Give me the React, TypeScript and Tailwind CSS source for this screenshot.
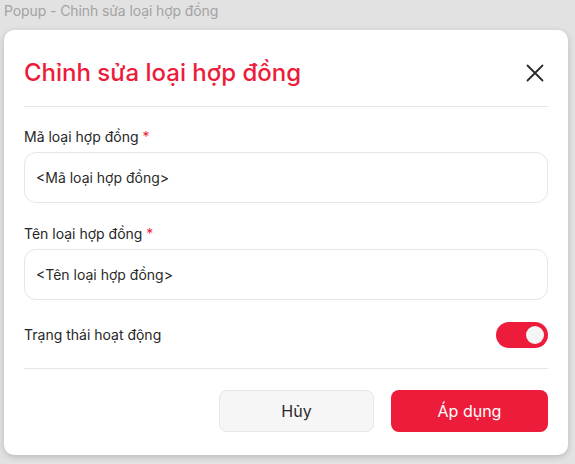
import React from "react";

export default function App() {
  const font = { fontFamily: "Inter, 'Noto Sans', sans-serif" };
  return (
    <div className="w-[575px] h-[464px] bg-[#e2e2e2] overflow-hidden" style={font}>
      <div className="h-[30px] pl-[4px] pt-[1px] text-[14px] leading-[20px] tracking-[-0.1px] text-[#a3a3a3]">
        Popup - Chỉnh sửa loại hợp đồng
      </div>
      <div className="ml-[4px] w-[564px] bg-white rounded-[10px] shadow-[0_2px_6px_rgba(0,0,0,0.18)] px-[20px] pt-[24px] pb-[23px]">
        <div className="flex items-center justify-between h-[38px]">
          <div className="text-[24px] leading-[38px] font-medium text-[#ec1c3a]">Chỉnh sửa loại hợp đồng</div>
          <svg width="18" height="18" viewBox="0 0 18 18" className="mr-[4px]">
            <path d="M1.5 1.5 L16.5 16.5 M16.5 1.5 L1.5 16.5" stroke="#2b2b2b" strokeWidth="1.8" strokeLinecap="round" />
          </svg>
        </div>
        <div className="mt-[14px] h-px bg-[#e6e6e6]" />
        <div className="mt-[20px] text-[14px] leading-[20px] text-[#262626]">
          Mã loại hợp đồng <span className="text-[#ec1c3a]">*</span>
        </div>
        <div className="mt-[5px] h-[51px] rounded-[12px] border border-[#e6e6e6] flex items-center px-[11px] text-[14px] text-[#2b2b2b]">
          &lt;Mã loại hợp đồng&gt;
        </div>
        <div className="mt-[21px] text-[14px] leading-[20px] text-[#262626]">
          Tên loại hợp đồng <span className="text-[#ec1c3a]">*</span>
        </div>
        <div className="mt-[5px] h-[51px] rounded-[12px] border border-[#e6e6e6] flex items-center px-[11px] text-[14px] text-[#2b2b2b]">
          &lt;Tên loại hợp đồng&gt;
        </div>
        <div className="mt-[22px] h-[26px] flex items-center justify-between">
          <div className="text-[14px] leading-[20px] text-[#262626]">Trạng thái hoạt động</div>
          <div className="w-[52px] h-[26px] rounded-full bg-[#ec1c3a] flex items-center justify-end pr-[4px]">
            <div className="w-[18px] h-[18px] rounded-full bg-[#f5f5f5]" />
          </div>
        </div>
        <div className="mt-[20px] h-px bg-[#e6e6e6]" />
        <div className="mt-[21px] flex justify-end gap-[17px]">
          <button className="w-[155px] h-[42px] rounded-[8px] bg-[#f6f6f6] border border-[#e6e6e6] text-[16px] text-[#2b2b2b]">
            Hủy
          </button>
          <button className="w-[157px] h-[42px] rounded-[8px] bg-[#ec1c3a] text-[16px] text-white">
            Áp dụng
          </button>
        </div>
      </div>
    </div>
  );
}
